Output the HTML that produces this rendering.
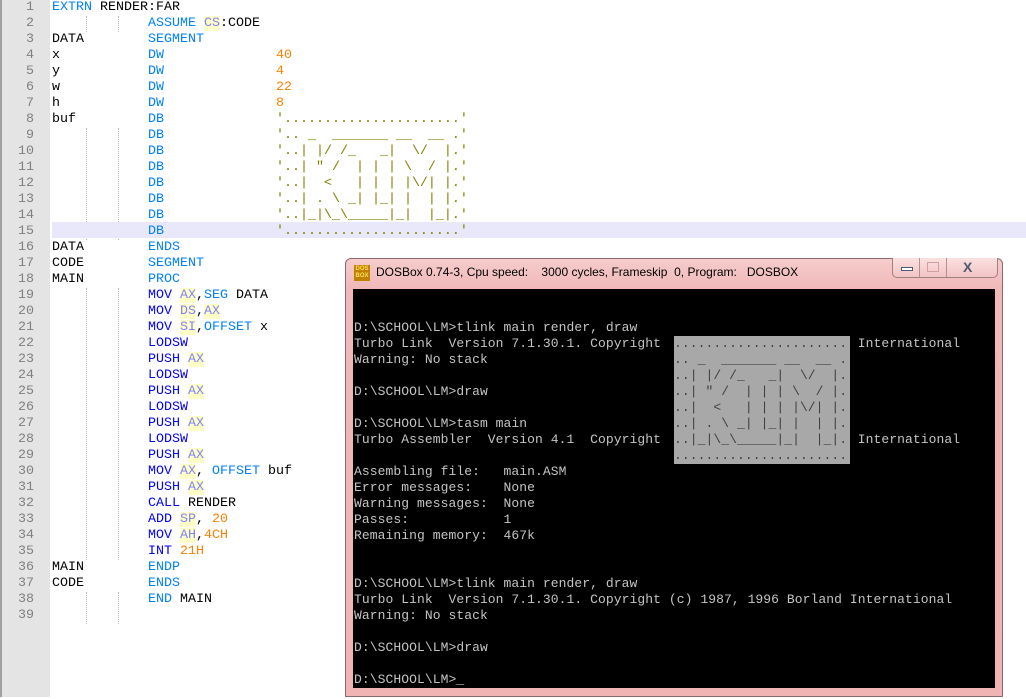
<!DOCTYPE html>
<html><head><meta charset="utf-8"><style>
*{margin:0;padding:0;box-sizing:border-box}
body{width:1026px;height:697px;overflow:hidden;background:#fff;position:relative;font-family:"Liberation Mono",monospace}
#gut{position:absolute;left:0;top:0;width:50px;height:697px;background:#e4e4e4;border-left:2px solid #a0a0a0}
.ln{position:absolute;left:0;width:34px;text-align:right;color:#808080;font-size:13.33px;line-height:16px;height:16px}
.cl{position:absolute;left:52px;height:16px;font-size:13.33px;line-height:16px;white-space:pre;color:#000}
.hl{background:#e8e8fa;right:0}
.g{position:absolute;width:0;border-left:1px dotted #b8b8b8}
.i{color:#0000ff}.d{color:#0080ff}.n{color:#ff8000}.r{color:#8080ff;background:#ffffc8}.s{color:#808000}
#ed{position:absolute;left:0;top:2px;width:1026px;height:697px}
#win{position:absolute;left:345px;top:258px;width:658px;height:439px;background:linear-gradient(#f6cccc,#f0b8b8 30px,#f0b4b4);border:1px solid #8a6a6a;border-radius:6px 6px 0 0}
#title{position:absolute;left:376px;top:265px;font:12px "Liberation Sans",sans-serif;color:#000;white-space:pre}
#ico{position:absolute;left:354px;top:265px;width:16px;height:16px;background:#c08000;color:#ffe060;font:bold 6px/7px "Liberation Sans",sans-serif;text-align:center;padding-top:1px}
#btns{position:absolute;left:892px;top:258px;width:106px;height:20px;border:1px solid #a08080;border-top:none;border-radius:0 0 5px 5px;background:linear-gradient(#fbe0e0,#f2c4c4)}
#scr{position:absolute;left:353px;top:289px;width:642px;height:399px;background:#000}
#dos{position:absolute;left:354px;top:288px;font-size:13px;letter-spacing:0.07px;line-height:16px;color:#c4c4c4;white-space:pre}
#art{position:absolute;left:674px;top:336px;width:176px;height:128px;background:#a8a8a8;font-size:13px;letter-spacing:0.07px;line-height:16px;color:#404040;white-space:pre}
</style></head><body>
<div id="gut"></div>
<div id="ed">
<div class="g" style="left:86px;top:14px;height:16px"></div><div class="g" style="left:118px;top:14px;height:16px"></div>
<div class="g" style="left:86px;top:126px;height:112px"></div><div class="g" style="left:118px;top:126px;height:112px"></div>
<div class="g" style="left:86px;top:286px;height:272px"></div><div class="g" style="left:118px;top:286px;height:272px"></div>
<div class="g" style="left:86px;top:590px;height:32px"></div><div class="g" style="left:118px;top:590px;height:32px"></div>
<div class="cl hl" style="top:220px"></div>
<div class="ln" style="top:-2px">1</div><div class="ln" style="top:14px">2</div><div class="ln" style="top:30px">3</div><div class="ln" style="top:46px">4</div><div class="ln" style="top:62px">5</div><div class="ln" style="top:78px">6</div><div class="ln" style="top:94px">7</div><div class="ln" style="top:110px">8</div><div class="ln" style="top:126px">9</div><div class="ln" style="top:142px">10</div><div class="ln" style="top:158px">11</div><div class="ln" style="top:174px">12</div><div class="ln" style="top:190px">13</div><div class="ln" style="top:206px">14</div><div class="ln" style="top:222px">15</div><div class="ln" style="top:238px">16</div><div class="ln" style="top:254px">17</div><div class="ln" style="top:270px">18</div><div class="ln" style="top:286px">19</div><div class="ln" style="top:302px">20</div><div class="ln" style="top:318px">21</div><div class="ln" style="top:334px">22</div><div class="ln" style="top:350px">23</div><div class="ln" style="top:366px">24</div><div class="ln" style="top:382px">25</div><div class="ln" style="top:398px">26</div><div class="ln" style="top:414px">27</div><div class="ln" style="top:430px">28</div><div class="ln" style="top:446px">29</div><div class="ln" style="top:462px">30</div><div class="ln" style="top:478px">31</div><div class="ln" style="top:494px">32</div><div class="ln" style="top:510px">33</div><div class="ln" style="top:526px">34</div><div class="ln" style="top:542px">35</div><div class="ln" style="top:558px">36</div><div class="ln" style="top:574px">37</div><div class="ln" style="top:590px">38</div><div class="ln" style="top:606px">39</div>
<div class="cl" style="top:-2px"><span class="d">EXTRN</span> RENDER:FAR</div>
<div class="cl" style="top:14px">            <span class="d">ASSUME</span> <span class="r">CS</span>:CODE</div>
<div class="cl" style="top:30px">DATA        <span class="d">SEGMENT</span></div>
<div class="cl" style="top:46px">x           <span class="d">DW</span>              <span class="n">40</span></div>
<div class="cl" style="top:62px">y           <span class="d">DW</span>              <span class="n">4</span></div>
<div class="cl" style="top:78px">w           <span class="d">DW</span>              <span class="n">22</span></div>
<div class="cl" style="top:94px">h           <span class="d">DW</span>              <span class="n">8</span></div>
<div class="cl" style="top:110px">buf         <span class="d">DB</span>              <span class="s">'......................'</span></div>
<div class="cl" style="top:126px">            <span class="d">DB</span>              <span class="s">'.. _  _______ __  __ .'</span></div>
<div class="cl" style="top:142px">            <span class="d">DB</span>              <span class="s">'..| |/ /_   _|  \/  |.'</span></div>
<div class="cl" style="top:158px">            <span class="d">DB</span>              <span class="s">'..| " /  | | | \  / |.'</span></div>
<div class="cl" style="top:174px">            <span class="d">DB</span>              <span class="s">'..|  &lt;   | | | |\/| |.'</span></div>
<div class="cl" style="top:190px">            <span class="d">DB</span>              <span class="s">'..| . \ _| |_| |  | |.'</span></div>
<div class="cl" style="top:206px">            <span class="d">DB</span>              <span class="s">'..|_|\_\_____|_|  |_|.'</span></div>
<div class="cl" style="top:222px">            <span class="d">DB</span>              <span class="s">'......................'</span></div>
<div class="cl" style="top:238px">DATA        <span class="d">ENDS</span></div>
<div class="cl" style="top:254px">CODE        <span class="d">SEGMENT</span></div>
<div class="cl" style="top:270px">MAIN        <span class="d">PROC</span></div>
<div class="cl" style="top:286px">            <span class="i">MOV</span> <span class="r">AX</span>,<span class="d">SEG</span> DATA</div>
<div class="cl" style="top:302px">            <span class="i">MOV</span> <span class="r">DS</span>,<span class="r">AX</span></div>
<div class="cl" style="top:318px">            <span class="i">MOV</span> <span class="r">SI</span>,<span class="d">OFFSET</span> x</div>
<div class="cl" style="top:334px">            <span class="i">LODSW</span></div>
<div class="cl" style="top:350px">            <span class="i">PUSH</span> <span class="r">AX</span></div>
<div class="cl" style="top:366px">            <span class="i">LODSW</span></div>
<div class="cl" style="top:382px">            <span class="i">PUSH</span> <span class="r">AX</span></div>
<div class="cl" style="top:398px">            <span class="i">LODSW</span></div>
<div class="cl" style="top:414px">            <span class="i">PUSH</span> <span class="r">AX</span></div>
<div class="cl" style="top:430px">            <span class="i">LODSW</span></div>
<div class="cl" style="top:446px">            <span class="i">PUSH</span> <span class="r">AX</span></div>
<div class="cl" style="top:462px">            <span class="i">MOV</span> <span class="r">AX</span>, <span class="d">OFFSET</span> buf</div>
<div class="cl" style="top:478px">            <span class="i">PUSH</span> <span class="r">AX</span></div>
<div class="cl" style="top:494px">            <span class="i">CALL</span> RENDER</div>
<div class="cl" style="top:510px">            <span class="i">ADD</span> <span class="r">SP</span>, <span class="n">20</span></div>
<div class="cl" style="top:526px">            <span class="i">MOV</span> <span class="r">AH</span>,<span class="n">4CH</span></div>
<div class="cl" style="top:542px">            <span class="i">INT</span> <span class="n">21H</span></div>
<div class="cl" style="top:558px">MAIN        <span class="d">ENDP</span></div>
<div class="cl" style="top:574px">CODE        <span class="d">ENDS</span></div>
<div class="cl" style="top:590px">            <span class="d">END</span> MAIN</div>
</div>

<div id="win"></div>
<div id="ico">DOS<br>BOX</div>
<div id="title">DOSBox 0.74-3, Cpu speed:    3000 cycles, Frameskip  0, Program:   DOSBOX</div>
<div id="btns">
 <div style="position:absolute;left:26px;top:0;width:1px;height:19px;background:#b09090"></div>
 <div style="position:absolute;left:53px;top:0;width:1px;height:19px;background:#b09090"></div>
 <div style="position:absolute;left:8px;top:9px;width:12px;height:4px;border:1px solid #505a70;background:#fff"></div>
 <div style="position:absolute;left:34px;top:4px;width:12px;height:10px;border:1px solid #d0a0a0"></div>
 <div style="position:absolute;left:70px;top:0px;font:bold 14px/18px 'Liberation Sans',sans-serif;color:#505a70">X</div>
</div>
<div id="scr"></div>
<div id="dos">

D:\SCHOOL\LM>tlink main render, draw
Turbo Link  Version 7.1.30.1. Copyright                         International
Warning: No stack

D:\SCHOOL\LM>draw

D:\SCHOOL\LM>tasm main
Turbo Assembler  Version 4.1  Copyright                         International

Assembling file:   main.ASM
Error messages:    None
Warning messages:  None
Passes:            1
Remaining memory:  467k


D:\SCHOOL\LM>tlink main render, draw
Turbo Link  Version 7.1.30.1. Copyright (c) 1987, 1996 Borland International
Warning: No stack

D:\SCHOOL\LM>draw

D:\SCHOOL\LM>_</div>
<div id="art">......................
.. _  _______ __  __ .
..| |/ /_   _|  \/  |.
..| " /  | | | \  / |.
..|  &lt;   | | | |\/| |.
..| . \ _| |_| |  | |.
..|_|\_\_____|_|  |_|.
......................</div>
</body></html>
